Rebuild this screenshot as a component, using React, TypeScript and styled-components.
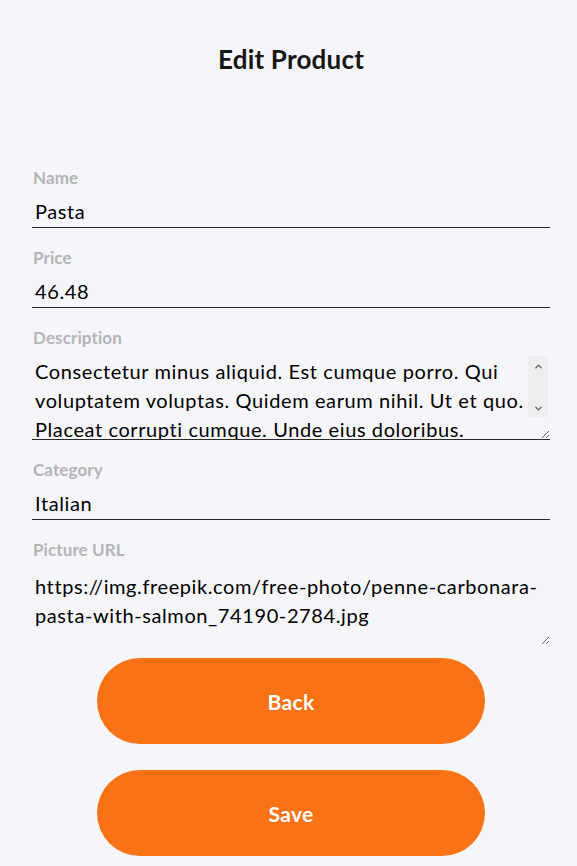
import React, { useState } from "react";
import styled, { createGlobalStyle } from "styled-components";
import { ChevronUp, ChevronDown } from "lucide-react";

const Global = createGlobalStyle`
  html, body { margin: 0; padding: 0; background: #f6f6fa; }
  body { font-family: "Lato", "Noto Sans", sans-serif; }
  * { box-sizing: border-box; }
`;

const Page = styled.div`
  min-height: 866px;
  background: #f6f6fa;
  padding: 43px 27px 0 32px;
`;

const Title = styled.h1`
  margin: 0 0 93px;
  text-align: center;
  font-size: 26px;
  line-height: 32px;
  font-weight: 700;
  color: #161616;
  letter-spacing: 0.2px;
`;

const Form = styled.form`
  display: flex;
  flex-direction: column;
`;

const Field = styled.div`
  display: flex;
  flex-direction: column;
  gap: 6px;
  margin-bottom: 20px;
`;

const Label = styled.label`
  font-size: 17px;
  line-height: 20px;
  font-weight: 700;
  color: #b4b4b7;
  padding-left: 1px;
  letter-spacing: 0.1px;
`;

const Input = styled.input`
  height: 34px;
  border: none;
  border-bottom: 1px solid #2b2b2b;
  background: transparent;
  font-family: inherit;
  font-size: 20px;
  letter-spacing: 0.6px;
  color: #000;
  padding: 0 3px;
  outline: none;
`;

const AreaWrap = styled.div`
  position: relative;
  display: flex;
  flex-direction: column;
`;

const TextArea = styled.textarea<{ $h: number; $line?: boolean }>`
  height: ${(p) => p.$h}px;
  border: none;
  border-bottom: 1px solid ${(p) => (p.$line ? "#2b2b2b" : "transparent")};
  background: transparent;
  font-family: inherit;
  font-size: 20px;
  letter-spacing: 0.6px;
  line-height: 29px;
  color: #000;
  padding: ${(p) => (p.$line ? "3px 22px 0 3px" : "6px 3px 0 3px")};
  outline: none;
  resize: vertical;
  overflow-y: auto;
  scrollbar-width: none;
  &::-webkit-scrollbar { display: none; }
`;

const ScrollRail = styled.div`
  position: absolute;
  top: 2px;
  right: 2px;
  width: 20px;
  height: 61px;
  background: #eeeef1;
  display: flex;
  flex-direction: column;
  justify-content: space-between;
  align-items: center;
  padding: 5px 0 3px;
  color: #55555a;
  pointer-events: none;
`;

const Actions = styled.div`
  display: flex;
  flex-direction: column;
  align-items: center;
  gap: 26px;
  margin-top: -8px;
`;

const Button = styled.button`
  width: 75%;
  height: 86px;
  border: none;
  border-radius: 43px;
  background: #f97316;
  color: #fff;
  font-family: inherit;
  font-size: 21px;
  font-weight: 700;
  letter-spacing: 0.3px;
  cursor: pointer;
`;

export default function App() {
  const [name, setName] = useState("Pasta");
  const [price, setPrice] = useState("46.48");
  const [desc, setDesc] = useState(
    "Consectetur minus aliquid. Est cumque porro. Qui voluptatem voluptas. Quidem earum nihil. Ut et quo. Placeat corrupti cumque. Unde eius doloribus. Necessitatibus dolorum quia."
  );
  const [cat, setCat] = useState("Italian");
  const [url, setUrl] = useState(
    "https://img.freepik.com/free-photo/penne-carbonara-pasta-with-salmon_74190-2784.jpg"
  );

  return (
    <>
      <Global />
      <Page>
        <Title>Edit Product</Title>
        <Form onSubmit={(e) => e.preventDefault()}>
          <Field>
            <Label>Name</Label>
            <Input value={name} onChange={(e) => setName(e.target.value)} />
          </Field>
          <Field>
            <Label>Price</Label>
            <Input value={price} onChange={(e) => setPrice(e.target.value)} />
          </Field>
          <Field>
            <Label>Description</Label>
            <AreaWrap>
              <TextArea $h={86} $line value={desc} onChange={(e) => setDesc(e.target.value)} />
              <ScrollRail>
                <ChevronUp size={11} strokeWidth={2.6} />
                <ChevronDown size={11} strokeWidth={2.6} />
              </ScrollRail>
            </AreaWrap>
          </Field>
          <Field>
            <Label>Category</Label>
            <Input value={cat} onChange={(e) => setCat(e.target.value)} />
          </Field>
          <Field>
            <Label>Picture URL</Label>
            <TextArea $h={80} value={url} onChange={(e) => setUrl(e.target.value)} />
          </Field>
          <Actions>
            <Button type="button">Back</Button>
            <Button type="submit">Save</Button>
          </Actions>
        </Form>
      </Page>
    </>
  );
}
